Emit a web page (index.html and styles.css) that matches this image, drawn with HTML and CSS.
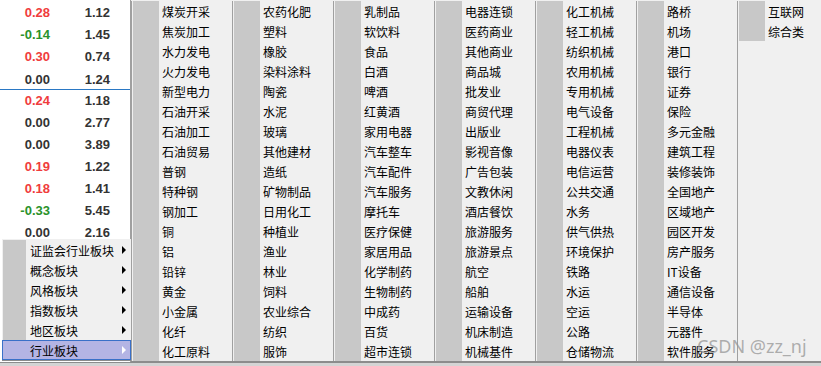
FILE: index.html
```html
<!DOCTYPE html>
<html lang="zh-CN">
<head>
  <meta charset="UTF-8">
  <title>行业板块</title>
  <link rel="stylesheet" href="styles.css">
</head>
<body>
  <div class="screen">
    <div class="quotes" id="quotes"></div>
    <div class="statusbar"></div>

    <div class="ctx-menu">
      <div class="item has-sub">证监会行业板块</div>
      <div class="item has-sub">概念板块</div>
      <div class="item has-sub">风格板块</div>
      <div class="item has-sub">指数板块</div>
      <div class="item has-sub">地区板块</div>
      <div class="item has-sub active">行业板块</div>
    </div>

    <div class="sub-menu" id="subMenu"></div>

    <div class="mark">CSDN @zz_nj</div>
  </div>

  <script>
    const quotes = [
      ['0.28', '1.12'], ['-0.14', '1.45'], ['0.30', '0.74'], ['0.00', '1.24'],
      ['0.24', '1.18'], ['0.00', '2.77'], ['0.00', '3.89'], ['0.19', '1.22'],
      ['0.18', '1.41'], ['-0.33', '5.45'], ['0.00', '2.16']
    ];
    const quotesEl = document.getElementById('quotes');
    quotes.forEach((q, i) => {
      const row = document.createElement('div');
      row.className = 'qrow' + (i === 3 ? ' split' : '');
      const chg = document.createElement('span');
      chg.innerText = q[0];
      if (q[0].startsWith('-')) chg.className = 'down';
      else if (q[0] !== '0.00') chg.className = 'up';
      const val = document.createElement('span');
      val.innerText = q[1];
      row.appendChild(chg);
      row.appendChild(val);
      quotesEl.appendChild(row);
    });

    // 行业板块 子菜单，每列18项
    const columns = [
      ['煤炭开采', '焦炭加工', '水力发电', '火力发电', '新型电力', '石油开采', '石油加工', '石油贸易', '普钢', '特种钢', '钢加工', '铜', '铝', '铅锌', '黄金', '小金属', '化纤', '化工原料'],
      ['农药化肥', '塑料', '橡胶', '染料涂料', '陶瓷', '水泥', '玻璃', '其他建材', '造纸', '矿物制品', '日用化工', '种植业', '渔业', '林业', '饲料', '农业综合', '纺织', '服饰'],
      ['乳制品', '软饮料', '食品', '白酒', '啤酒', '红黄酒', '家用电器', '汽车整车', '汽车配件', '汽车服务', '摩托车', '医疗保健', '家居用品', '化学制药', '生物制药', '中成药', '百货', '超市连锁'],
      ['电器连锁', '医药商业', '其他商业', '商品城', '批发业', '商贸代理', '出版业', '影视音像', '广告包装', '文教休闲', '酒店餐饮', '旅游服务', '旅游景点', '航空', '船舶', '运输设备', '机床制造', '机械基件'],
      ['化工机械', '轻工机械', '纺织机械', '农用机械', '专用机械', '电气设备', '工程机械', '电器仪表', '电信运营', '公共交通', '水务', '供气供热', '环境保护', '铁路', '水运', '空运', '公路', '仓储物流'],
      ['路桥', '机场', '港口', '银行', '证券', '保险', '多元金融', '建筑工程', '装修装饰', '全国地产', '区域地产', '园区开发', '房产服务', 'IT设备', '通信设备', '半导体', '元器件', '软件服务'],
      ['互联网', '综合类']
    ];
    const subMenu = document.getElementById('subMenu');
    columns.forEach(list => {
      const col = document.createElement('div');
      col.className = 'col';
      list.forEach(name => {
        const item = document.createElement('div');
        item.className = 'item';
        item.innerText = name;
        col.appendChild(item);
      });
      subMenu.appendChild(col);
    });
  </script>
</body>
</html>
```

FILE: styles.css
```css
body {
  margin: 0;
  background: #fff;
  font-family: "Noto Sans CJK SC", sans-serif;
  color: #000;
}
.screen {
  position: relative;
  width: 821px;
  height: 366px;
  overflow: hidden;
}
.quotes {
  width: 131px;
  height: 362px;
  box-sizing: border-box;
  padding-top: 2px;
  border-right: 1px solid #a0a0a0;
}
.qrow {
  display: grid;
  grid-template-columns: 50px 60px;
  box-sizing: border-box;
  height: 22px;
  padding-top: 3px;
  line-height: 19px;
  text-align: right;
  font: bold 13px "Liberation Sans", Arial, sans-serif;
  color: #333;
}
.qrow.split {
  border-bottom: 1px solid #2a78c4;
  line-height: 18px;
}
.qrow .up {
  color: #f03c3c;
}
.qrow .down {
  color: #2a922a;
}
.statusbar {
  height: 3px;
  border-top: 1px solid #8c8c8c;
  background: #d4d4d4;
}

/* контекстное меню слева */
.ctx-menu {
  position: absolute;
  left: 2px;
  top: 239px;
  width: 129px;
  padding-top: 1px;
  background: #f0f0f0;
  border-bottom: 1px solid #8c8c8c;
}
.ctx-menu .item {
  display: flex;
  align-items: center;
  height: 20px;
  font-size: 12px;
  padding-left: 1px;
  box-sizing: border-box;
}
.ctx-menu .item::before {
  content: "";
  align-self: stretch;
  width: 23px;
  margin-right: 4px;
  background: #c8c8c8;
}
.ctx-menu .has-sub::after {
  content: "";
  margin-left: auto;
  margin-right: 5px;
  border-left: 4px solid #000;
  border-top: 4px solid transparent;
  border-bottom: 4px solid transparent;
}
.ctx-menu .item.active {
  background: #b4b4e4;
  box-shadow: inset 0 0 0 1px #3a70c8;
}
.ctx-menu .item.active::before {
  background: transparent;
}
.ctx-menu .item.active::after {
  border-left-color: #fff;
}

/* подменю отраслей */
.sub-menu {
  position: absolute;
  left: 131px;
  top: 0;
  right: 0;
  display: flex;
  padding-top: 1px;
  background: #f0f0f0;
  border-bottom: 1px solid #8c8c8c;
}
.sub-menu .col {
  width: 99px;
  padding-left: 1px;
  border-left: 1px solid #a0a0a0;
}
.sub-menu .col:last-child {
  flex: 1;
}
.sub-menu .item {
  display: flex;
  align-items: center;
  height: 20px;
  font-size: 12px;
  white-space: nowrap;
}
.sub-menu .item::before {
  content: "";
  align-self: stretch;
  width: 26px;
  margin-right: 3px;
  background: #c8c8c8;
}
.mark {
  position: absolute;
  left: 697px;
  top: 334px;
  font: 18px "Noto Sans", sans-serif;
  color: rgba(150, 150, 150, 0.75);
}
```
